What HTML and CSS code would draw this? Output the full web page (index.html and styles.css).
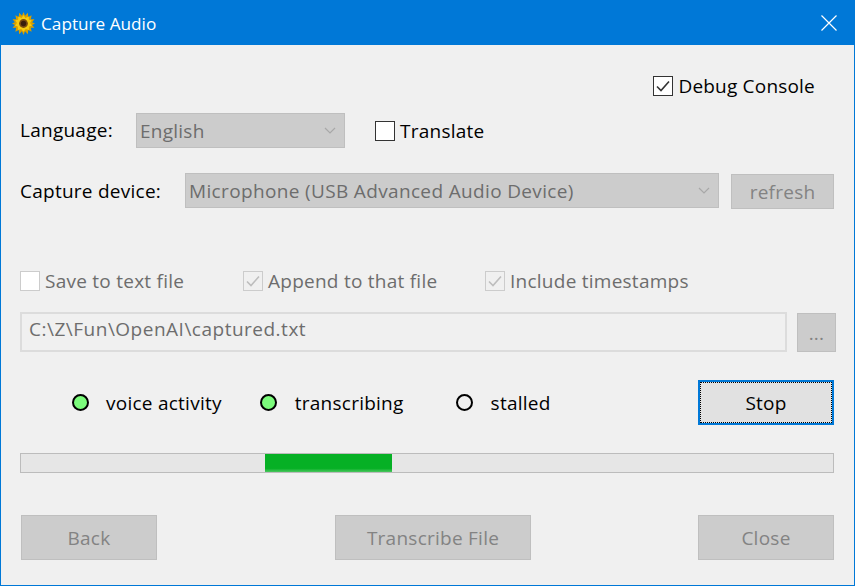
FILE: index.html
```html
<!DOCTYPE html>
<html lang="en">
<head>
    <meta charset="UTF-8">
    <meta name="viewport" content="width=device-width, initial-scale=1.0">
    <title>Capture Audio</title>
    <link rel="stylesheet" href="styles.css">
</head>
<body>
    <div class="window">
        <div class="titlebar">
            <svg class="app-icon" width="23" height="23" viewBox="0 0 24 24">
                <polygon fill="#d99f00" points="12,0 13.6,4 16.6,0.9 16.9,5.1 20.5,3.5 19.6,7.6 23.4,7.5 21,10.8 24,12 21,13.6 23.4,16.5 19.6,16.4 20.5,20.5 16.9,18.9 16.6,23.1 13.6,20 12,24 10.4,20 7.4,23.1 7.1,18.9 3.5,20.5 4.4,16.4 0.6,16.5 3,13.6 0,12 3,10.8 0.6,7.5 4.4,7.6 3.5,3.5 7.1,5.1 7.4,0.9 10.4,4"/>
                <polygon fill="#f6cc10" points="12,3 14,6.2 17.5,4.6 17.6,8 20.6,8.7 18.8,11.6 21,14 17.9,15 17.8,18.8 14.4,17.8 12,20.6 9.6,17.8 6.2,18.8 6.1,15 3,14 5.2,11.6 3.4,8.7 6.4,8 6.5,4.6 10,6.2"/>
                <circle cx="12" cy="12" r="4.6" fill="#7a4a10"/>
                <circle cx="12" cy="12" r="2.8" fill="#3a1d0c"/>
            </svg>
            <span class="title-text">Capture Audio</span>
            <svg class="close-icon" width="16" height="16" viewBox="0 0 16 16">
                <path d="M0.5 0.5 L15.5 15.5 M15.5 0.5 L0.5 15.5" stroke="#fff" stroke-width="1.2" fill="none"/>
            </svg>
        </div>

        <div class="content">
            <div class="row debug-row">
                <label class="check-item">
                    <span class="box box-on">
                        <svg width="14" height="12" viewBox="0 0 14 12"><path d="M1 6.5 L5 10.5 L13 1.5" stroke="#333" stroke-width="1.6" fill="none"/></svg>
                    </span>
                    Debug Console
                </label>
            </div>

            <div class="row language-row">
                <span class="label">Language:</span>
                <div class="select language-select">
                    English
                    <svg class="chevron" width="12" height="7" viewBox="0 0 12 7"><path d="M1 1 L6 6 L11 1" stroke="#a8a8a8" stroke-width="1.2" fill="none"/></svg>
                </div>
                <label class="check-item translate">
                    <span class="box box-on"></span>
                    Translate
                </label>
            </div>

            <div class="row device-row">
                <span class="label">Capture device:</span>
                <div class="select device-select">
                    Microphone (USB Advanced Audio Device)
                    <svg class="chevron" width="12" height="7" viewBox="0 0 12 7"><path d="M1 1 L6 6 L11 1" stroke="#a8a8a8" stroke-width="1.2" fill="none"/></svg>
                </div>
                <button class="btn refresh-btn">refresh</button>
            </div>

            <div class="row options-row">
                <label class="check-item disabled save-opt">
                    <span class="box box-off"></span>
                    Save to text file
                </label>
                <label class="check-item disabled append-opt">
                    <span class="box box-off">
                        <svg width="14" height="12" viewBox="0 0 14 12"><path d="M1 6.5 L5 10.5 L13 1.5" stroke="#bdbdbd" stroke-width="1.6" fill="none"/></svg>
                    </span>
                    Append to that file
                </label>
                <label class="check-item disabled">
                    <span class="box box-off">
                        <svg width="14" height="12" viewBox="0 0 14 12"><path d="M1 6.5 L5 10.5 L13 1.5" stroke="#bdbdbd" stroke-width="1.6" fill="none"/></svg>
                    </span>
                    Include timestamps
                </label>
            </div>

            <div class="row file-row">
                <div class="file-input">C:\Z\Fun\OpenAI\captured.txt</div>
                <button class="btn browse-btn">...</button>
            </div>

            <div class="row status-row">
                <span class="dot dot-on"></span><span class="status-label voice">voice activity</span>
                <span class="dot dot-on"></span><span class="status-label transcribing">transcribing</span>
                <span class="dot"></span><span class="status-label stalled">stalled</span>
                <button class="stop-btn"><span class="stop-inner">Stop</span></button>
            </div>

            <div class="progress"><div class="progress-fill"></div></div>

            <div class="row bottom-row">
                <button class="btn big-btn">Back</button>
                <button class="btn big-btn transcribe-btn">Transcribe File</button>
                <button class="btn big-btn close-btn">Close</button>
            </div>
        </div>
    </div>
</body>
</html>
```

FILE: styles.css
```css
* {
    box-sizing: border-box;
}
html, body {
    margin: 0;
    padding: 0;
}
body {
    width: 855px;
    height: 586px;
    overflow: hidden;
    font-family: "Open Sans", "Noto Sans", sans-serif;
    font-size: 19px;
    letter-spacing: 0.25px;
    color: #000;
}
.window {
    width: 855px;
    height: 586px;
    background-color: #f0f0f0;
    border: 1px solid #0078d7;
    display: flex;
    flex-direction: column;
}
.titlebar {
    height: 44px;
    background-color: #0078d7;
    color: #fff;
    display: flex;
    align-items: center;
    padding-left: 11px;
    padding-right: 17px;
    flex: none;
}
.app-icon {
    flex: none;
}
.title-text {
    margin-left: 6px;
    font-size: 17.2px;
    letter-spacing: 0;
}
.close-icon {
    margin-left: auto;
}

.content {
    padding-left: 19px;
    padding-right: 20px;
    flex: 1;
}
.row {
    display: flex;
    align-items: center;
}

/* checkboxes */
.check-item {
    display: flex;
    align-items: center;
    gap: 5px;
}
.check-item.disabled {
    color: #6d6d6d;
}
.box {
    width: 20px;
    height: 20px;
    display: flex;
    align-items: center;
    justify-content: center;
    flex: none;
}
.box-on {
    background-color: #fff;
    border: 1px solid #333;
}
.box-off {
    border: 1px solid #ccc;
}
.save-opt .box-off {
    background-color: #fff;
}

/* rows */
.debug-row {
    height: 20px;
    margin-top: 31px;
    justify-content: flex-end;
    padding-right: 19px;
    letter-spacing: 0.2px;
}
.language-row {
    height: 35px;
    margin-top: 17px;
}
.language-row .label {
    width: 116px;
    flex: none;
    padding-bottom: 2px;
}
.select {
    height: 100%;
    background-color: #ccc;
    border: 1px solid #bfbfbf;
    color: #6d6d6d;
    display: flex;
    align-items: center;
    justify-content: space-between;
    padding-left: 3px;
    padding-right: 8px;
    flex: none;
}
.language-select {
    width: 209px;
}
.translate {
    margin-left: 30px;
}
.device-row {
    height: 36px;
    margin-top: 25px;
}
.device-row .label {
    width: 165px;
    flex: none;
}
.device-select {
    width: 534px;
    height: 35px;
    align-self: flex-start;
    letter-spacing: 0.35px;
}
.btn {
    background-color: #ccc;
    border: 1px solid #bfbfbf;
    color: #838383;
    font-family: inherit;
    font-size: 19px;
    letter-spacing: inherit;
    padding: 0;
    flex: none;
}
.refresh-btn {
    width: 103px;
    height: 35px;
    margin-left: 12px;
    align-self: flex-end;
}
.options-row {
    height: 20px;
    margin-top: 62px;
}
.save-opt {
    width: 223px;
}
.append-opt {
    width: 242px;
}
.file-row {
    height: 40px;
    margin-top: 21px;
}
.file-input {
    width: 767px;
    height: 40px;
    flex: none;
    border: 2px solid #dcdcdc;
    color: #6d6d6d;
    padding-left: 7px;
    line-height: 31px;
    letter-spacing: 0.5px;
}
.browse-btn {
    width: 39px;
    height: 39px;
    margin-left: 10px;
    align-self: flex-end;
}

/* status lights */
.status-row {
    height: 45px;
    margin-top: 28px;
    padding-left: 52px;
}
.dot {
    width: 17px;
    height: 17px;
    border: 2px solid #000;
    border-radius: 50%;
    flex: none;
}
.dot-on {
    background-color: #7cfc7c;
}
.status-label {
    margin-left: 17px;
}
.voice {
    margin-right: 38px;
}
.transcribing {
    margin-left: 18px;
    margin-right: 52px;
}
.stalled {
    margin-left: 18px;
}
.stop-btn {
    width: 136px;
    height: 45px;
    margin-left: auto;
    background-color: #e1e1e1;
    border: 2px solid #0078d7;
    padding: 0;
    font-family: inherit;
    font-size: 19px;
    letter-spacing: inherit;
    color: #000;
}
.stop-inner {
    display: flex;
    align-items: center;
    justify-content: center;
    width: 100%;
    height: 100%;
    border: 1px dotted #000;
}

.progress {
    width: 814px;
    height: 20px;
    margin-top: 28px;
    background-color: #e6e6e6;
    border: 1px solid #bcbcbc;
    position: relative;
}
.progress-fill {
    position: absolute;
    left: 244px;
    top: 0;
    bottom: 0;
    width: 127px;
    background: linear-gradient(to bottom, #06b025 80%, #4cc65f 100%);
}

.bottom-row {
    height: 45px;
    margin-top: 42px;
    padding-left: 1px;
}
.big-btn {
    width: 136px;
    height: 45px;
}
.transcribe-btn {
    width: 196px;
    margin-left: 178px;
}
.close-btn {
    margin-left: auto;
}
```
